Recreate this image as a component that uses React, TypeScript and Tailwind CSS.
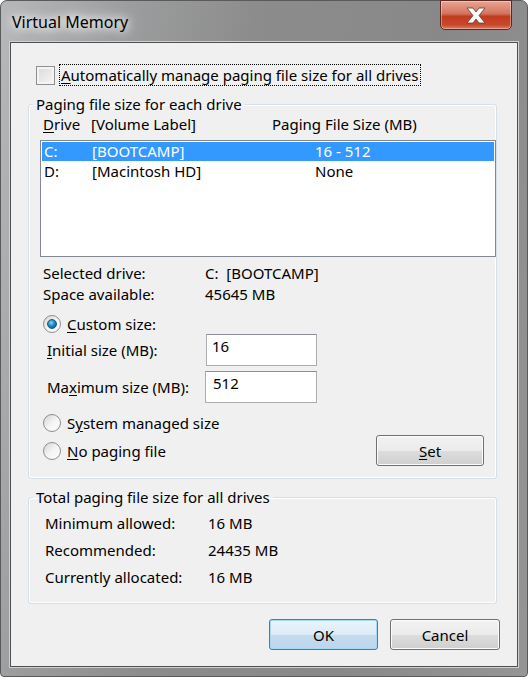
import React from "react";

const font = { fontFamily: '"Segoe UI", "Noto Sans", "Liberation Sans", sans-serif' };

function U({ children }: { children: React.ReactNode }) {
  return <span className="underline underline-offset-2 decoration-1">{children}</span>;
}

function Radio({ checked }: { checked?: boolean }) {
  return (
    <span className="w-[18px] h-[18px] rounded-full border border-[#8f8f8f] bg-gradient-to-br from-[#d4d4d4] via-[#f4f4f4] to-[#ffffff] flex items-center justify-center shrink-0">
      {checked && (
        <span className="w-[10px] h-[10px] rounded-full bg-[radial-gradient(circle_at_40%_35%,#8fd6f5_0%,#1d8ac4_45%,#0b4f78_100%)] border border-[#0f5d8a]" />
      )}
    </span>
  );
}

function Button({ children, primary }: { children: React.ReactNode; primary?: boolean }) {
  return (
    <div
      className={
        "h-[31px] rounded-[3px] border flex items-center justify-center text-[15px] text-black " +
        (primary
          ? "border-[#3c7fb1] bg-[linear-gradient(to_bottom,#eaf4fb_0%,#dcebf7_50%,#c6dcee_51%,#bcd6ec_100%)] shadow-[inset_0_0_0_1px_#a8d8f5]"
          : "border-[#707070] bg-[linear-gradient(to_bottom,#f2f2f2_0%,#ebebeb_50%,#dddddd_51%,#cfcfcf_100%)] shadow-[inset_0_0_0_1px_#fcfcfc]")
      }
    >
      {children}
    </div>
  );
}

export default function App() {
  return (
    <div className="w-[528px] h-[681px] bg-white" style={font}>
      <div className="w-[528px] h-[677px] rounded-t-[7px] rounded-b-[4px] border border-[#5a5a5a] bg-[linear-gradient(100deg,#b6b8ba_0%,#9c9d9e_20%,#8c8c8c_40%,#888888_70%,#959595_100%)] flex flex-col">
        {/* title bar */}
        <div className="h-[41px] flex items-start justify-between shrink-0">
          <span className="mt-[9px] ml-[11px] text-[16px] text-black leading-[24px] [text-shadow:0_0_8px_#ffffff,0_0_12px_#ffffff,0_0_16px_#e8e8e8]">
            Virtual Memory
          </span>
          <div className="mr-[15px] mt-[-1px] w-[72px] h-[30px] rounded-b-[5px] border border-[#5a2a22] bg-[linear-gradient(to_bottom,#e8a493_0%,#d4745f_45%,#c23b1f_55%,#c8482c_85%,#e07a5c_100%)] flex items-center justify-center shadow-[inset_0_0_0_1px_rgba(255,255,255,0.35)]">
            <svg width="24" height="17" viewBox="0 0 24 17">
              <path d="M3 1 L9 1 L12 5 L15 1 L21 1 L15 8.5 L21 16 L15 16 L12 12 L9 16 L3 16 L9 8.5 Z" fill="#fafafa" stroke="#6a3a30" strokeWidth="0.8" />
            </svg>
          </div>
        </div>

        {/* client area */}
        <div className="mx-[9px] h-[625px] border border-[#4f4f4f] shadow-[0_0_0_1px_#d0d0d0] bg-[#f0f0f0] flex flex-col text-[15px] text-black leading-[20px]">
          {/* checkbox */}
          <div className="mt-[22px] ml-[25px] flex items-center gap-[5px]">
            <span className="w-[19px] h-[19px] border border-[#8e8f8f] bg-[linear-gradient(135deg,#d9d9d9,#f7f7f7)] shadow-[inset_0_0_0_2px_#f4f4f4] shrink-0" />
            <span className="outline outline-1 outline-dotted outline-black px-[1px]">
              <U>A</U>utomatically manage paging file size for all drives
            </span>
          </div>

          {/* group 1 */}
          <fieldset className="mt-[9px] ml-[17px] w-[469px] h-[385px] border border-[#d5dfe5] rounded-[3px] shadow-[inset_0_0_0_1px_#ffffff] p-0">
            <legend className="ml-[4px] px-[3px]">Paging file size for each drive</legend>
            <div className="ml-[14px] flex">
              <span className="w-[48px]">
                <U>D</U>rive
              </span>
              <span className="w-[181px]">[Volume Label]</span>
              <span>Paging File Size (MB)</span>
            </div>
            <div className="mt-[6px] ml-[11px] w-[456px] h-[117px] border border-[#828790] bg-white p-[1px] leading-[19px]">
              <div className="h-[19px] bg-[#3399ff] text-white flex items-center">
                <span className="w-[50px] pl-[2px]">C:</span>
                <span className="w-[223px]">[BOOTCAMP]</span>
                <span>16 - 512</span>
              </div>
              <div className="h-[20px] flex items-center">
                <span className="w-[50px] pl-[2px]">D:</span>
                <span className="w-[223px]">[Macintosh HD]</span>
                <span>None</span>
              </div>
            </div>
            <div className="mt-[6px] ml-[14px] flex leading-[21px]">
              <span className="w-[162px]">Selected drive:</span>
              <span>C:&nbsp;&nbsp;[BOOTCAMP]</span>
            </div>
            <div className="ml-[14px] flex leading-[21px]">
              <span className="w-[162px]">Space available:</span>
              <span>45645 MB</span>
            </div>
            <div className="mt-[9px] ml-[14px] h-[20px] flex items-center gap-[6px]">
              <Radio checked />
              <span>
                <U>C</U>ustom size:
              </span>
            </div>
            <div className="ml-[18px] flex items-center">
              <span className="w-[159px]">
                <U>I</U>nitial size (MB):
              </span>
              <div className="w-[111px] h-[32px] border border-[#abadb3] border-t-[#8b8e95] bg-white pl-[5px] pt-[1px]">16</div>
            </div>
            <div className="mt-[5px] ml-[18px] flex items-center">
              <span className="w-[158px]">
                Ma<U>x</U>imum size (MB):
              </span>
              <div className="w-[112px] h-[32px] border border-[#abadb3] border-t-[#8b8e95] bg-white pl-[7px] pt-[1px]">512</div>
            </div>
            <div className="mt-[10px] ml-[14px] h-[20px] flex items-center gap-[6px]">
              <Radio />
              <span>
                S<U>y</U>stem managed size
              </span>
            </div>
            <div className="mt-[2px] ml-[14px] mr-[12px] flex items-center justify-between">
              <div className="flex items-center gap-[6px]">
                <Radio />
                <span>
                  <U>N</U>o paging file
                </span>
              </div>
              <div className="w-[108px]">
                <Button>
                  <U>S</U>et
                </Button>
              </div>
            </div>
          </fieldset>

          {/* group 2 */}
          <fieldset className="mt-[8px] ml-[17px] w-[469px] h-[117px] border border-[#d5dfe5] rounded-[3px] shadow-[inset_0_0_0_1px_#ffffff] p-0">
            <legend className="ml-[4px] px-[3px]">Total paging file size for all drives</legend>
            <div className="mt-[6px] ml-[16px] flex flex-col gap-[7px]">
              <div className="flex">
                <span className="w-[163px]">Minimum allowed:</span>
                <span>16 MB</span>
              </div>
              <div className="flex">
                <span className="w-[163px]">Recommended:</span>
                <span>24435 MB</span>
              </div>
              <div className="flex">
                <span className="w-[163px]">Currently allocated:</span>
                <span>16 MB</span>
              </div>
            </div>
          </fieldset>

          {/* buttons */}
          <div className="mt-[15px] mr-[17px] flex justify-end gap-[12px]">
            <div className="w-[109px]">
              <Button primary>OK</Button>
            </div>
            <div className="w-[110px]">
              <Button>Cancel</Button>
            </div>
          </div>
        </div>
      </div>
    </div>
  );
}
